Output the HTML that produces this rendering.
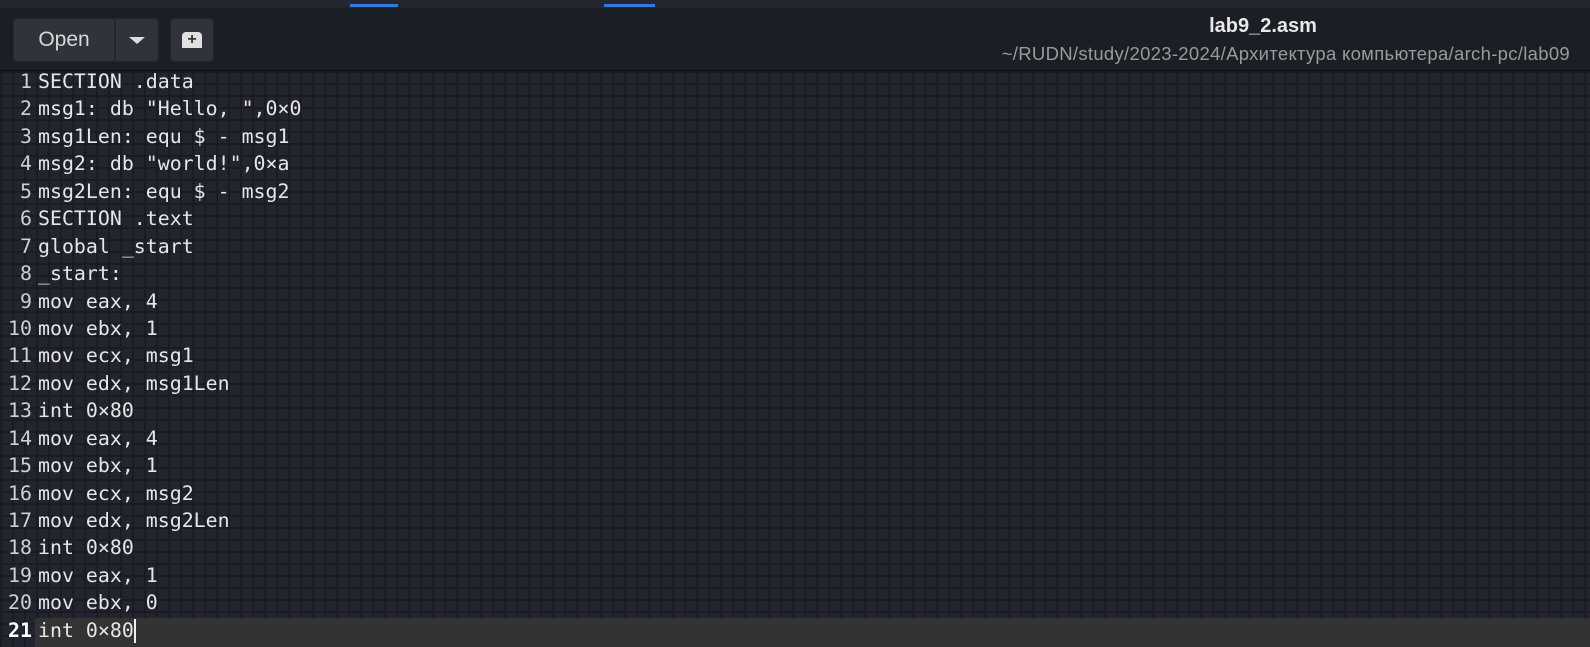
<!DOCTYPE html>
<html><head><meta charset="utf-8"><style>
body{margin:0;width:1590px;height:647px;overflow:hidden;background:#1c1f26;font-family:"Liberation Sans",sans-serif;position:relative}
.top{position:absolute;left:0;top:0;width:1590px;height:8px;background:#23262e}
.hdr{position:absolute;left:0;top:8px;width:1590px;height:62px;background:#1c1e25;border-bottom:1px solid #0e0f12}
.btn{position:absolute;top:18px;height:42px;background:#30333b;border-radius:5px;border:1px solid #25272d;color:#d8d8d8}
.ed{position:absolute;left:0;top:71px;width:1590px;height:576px;background-color:#22252f;
background-image:linear-gradient(to right,#1b1c21 2px,transparent 2px),linear-gradient(to bottom,#1b1c21 2px,transparent 2px);background-size:12px 12px}
.hl{position:absolute;left:35px;top:618px;width:1555px;height:29px;background:#333333}
.code{position:absolute;left:0;top:68px;font-family:"DejaVu Sans Mono","Liberation Mono",monospace;font-size:19.9px;color:#e6e6e6;white-space:pre}
.code div{height:27.45px;line-height:27.45px}
.ln{display:inline-block;width:32px;text-align:right;color:#d0d0d0;margin-right:6px}
</style></head><body>
<div class="top"><div style="position:absolute;left:350px;top:4px;width:48px;height:3px;background:#2f7be0"></div><div style="position:absolute;left:604px;top:4px;width:51px;height:3px;background:#2f7be0"></div></div>
<div class="hdr"></div>
<div class="btn" style="left:13px;width:100px;font-size:21px;line-height:42px;text-align:center;border-radius:5px 0 0 5px">Open</div>
<div class="btn" style="left:115px;width:42px;border-radius:0 5px 5px 0"><div style="position:absolute;left:13px;top:18px;width:0;height:0;border-left:8px solid transparent;border-right:8px solid transparent;border-top:7px solid #ddd"></div></div>
<div class="btn" style="left:170px;width:42px"><div style="position:absolute;left:11px;top:13px;width:20px;height:16px;background:#e0e0e0;border-radius:4px 4px 0 0;color:#30333b;font-weight:bold;font-size:16px;line-height:16px;text-align:center">+</div></div>
<div style="position:absolute;left:1013px;width:500px;top:15px;text-align:center;color:#e8e8e8;font-weight:bold;font-size:20px">lab9_2.asm</div>
<div style="position:absolute;right:20px;top:43px;color:#9a9a9a;font-size:18.5px;letter-spacing:0.3px">~/RUDN/study/2023-2024/Архитектура компьютера/arch-pc/lab09</div>
<div class="ed"></div>
<div class="hl"></div>
<div class="code"><div><span class="ln">1</span>SECTION .data</div><div><span class="ln">2</span>msg1: db "Hello, ",0×0</div><div><span class="ln">3</span>msg1Len: equ $ - msg1</div><div><span class="ln">4</span>msg2: db "world!",0×a</div><div><span class="ln">5</span>msg2Len: equ $ - msg2</div><div><span class="ln">6</span>SECTION .text</div><div><span class="ln">7</span>global _start</div><div><span class="ln">8</span>_start:</div><div><span class="ln">9</span>mov eax, 4</div><div><span class="ln">10</span>mov ebx, 1</div><div><span class="ln">11</span>mov ecx, msg1</div><div><span class="ln">12</span>mov edx, msg1Len</div><div><span class="ln">13</span>int 0×80</div><div><span class="ln">14</span>mov eax, 4</div><div><span class="ln">15</span>mov ebx, 1</div><div><span class="ln">16</span>mov ecx, msg2</div><div><span class="ln">17</span>mov edx, msg2Len</div><div><span class="ln">18</span>int 0×80</div><div><span class="ln">19</span>mov eax, 1</div><div><span class="ln">20</span>mov ebx, 0</div><div><span class="ln" style="font-weight:bold;color:#fff">21</span>int 0×80<span style="display:inline-block;width:2px;height:24px;background:#eee;vertical-align:middle"></span></div></div>
</body></html>
